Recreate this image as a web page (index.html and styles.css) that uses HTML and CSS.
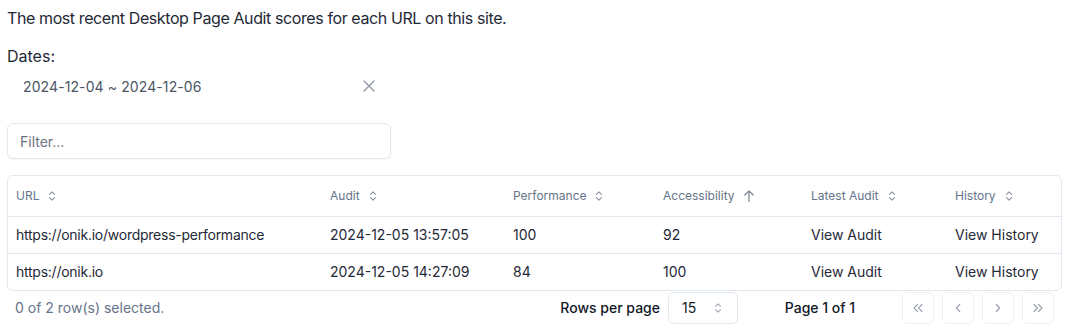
FILE: index.html
```html
<!DOCTYPE html>
<html lang="en">
<head>
<meta charset="utf-8">
<link rel="stylesheet" href="styles.css">
</head>
<body>
<div class="page">
  <p class="intro">The most recent Desktop Page Audit scores for each URL on this site.</p>
  <div class="dates-label">Dates:</div>
  <div class="datepicker">
    <span class="date-range">2024-12-04 ~ 2024-12-06</span>
    <svg class="clear-icon" width="14" height="14" viewBox="0 0 14 14" fill="none" stroke="#8b93a1" stroke-width="1.3" stroke-linecap="round"><path d="M2 2l10 10M12 2L2 12"/></svg>
  </div>
  <div class="filter-wrap"><input class="filter" type="text" placeholder="Filter..."></div>
  <div class="table-box">
    <table class="data-table">
      <colgroup>
        <col class="c-url"><col class="c-audit"><col class="c-perf"><col class="c-acc"><col class="c-latest"><col class="c-hist">
      </colgroup>
      <thead>
        <tr>
          <th><span class="th-in">URL <svg class="sort" width="10" height="12" viewBox="0 0 10 12" fill="none" stroke="#8b93a1" stroke-width="1.1" stroke-linecap="round" stroke-linejoin="round"><path d="M2.5 4.3L5 1.8l2.5 2.5M2.5 7.7L5 10.2l2.5-2.5"/></svg></span></th>
          <th><span class="th-in">Audit <svg class="sort" width="10" height="12" viewBox="0 0 10 12" fill="none" stroke="#8b93a1" stroke-width="1.1" stroke-linecap="round" stroke-linejoin="round"><path d="M2.5 4.3L5 1.8l2.5 2.5M2.5 7.7L5 10.2l2.5-2.5"/></svg></span></th>
          <th><span class="th-in">Performance <svg class="sort" width="10" height="12" viewBox="0 0 10 12" fill="none" stroke="#8b93a1" stroke-width="1.1" stroke-linecap="round" stroke-linejoin="round"><path d="M2.5 4.3L5 1.8l2.5 2.5M2.5 7.7L5 10.2l2.5-2.5"/></svg></span></th>
          <th><span class="th-in">Accessibility <svg class="sort-up" width="12" height="14" viewBox="0 0 12 14" fill="none" stroke="#7b8494" stroke-width="1.2" stroke-linecap="round" stroke-linejoin="round"><path d="M6 12.5V1.8M1.8 6L6 1.8 10.2 6"/></svg></span></th>
          <th><span class="th-in">Latest Audit <svg class="sort" width="10" height="12" viewBox="0 0 10 12" fill="none" stroke="#8b93a1" stroke-width="1.1" stroke-linecap="round" stroke-linejoin="round"><path d="M2.5 4.3L5 1.8l2.5 2.5M2.5 7.7L5 10.2l2.5-2.5"/></svg></span></th>
          <th><span class="th-in">History <svg class="sort" width="10" height="12" viewBox="0 0 10 12" fill="none" stroke="#8b93a1" stroke-width="1.1" stroke-linecap="round" stroke-linejoin="round"><path d="M2.5 4.3L5 1.8l2.5 2.5M2.5 7.7L5 10.2l2.5-2.5"/></svg></span></th>
        </tr>
      </thead>
      <tbody>
        <tr>
          <td class="url">https://onik.io/wordpress-performance</td>
          <td>2024-12-05 13:57:05</td>
          <td>100</td>
          <td>92</td>
          <td>View Audit</td>
          <td>View History</td>
        </tr>
        <tr>
          <td class="url">https://onik.io</td>
          <td>2024-12-05 14:27:09</td>
          <td>84</td>
          <td>100</td>
          <td>View Audit</td>
          <td>View History</td>
        </tr>
      </tbody>
    </table>
  </div>
  <div class="footer">
    <div class="selected">0 of 2 row(s) selected.</div>
    <div class="controls">
      <div class="rows-per-page">
        <span class="rpp-label">Rows per page</span>
        <div class="select">
          <span>15</span>
          <svg width="10" height="12" viewBox="0 0 10 12" fill="none" stroke="#a3aab6" stroke-width="1.1" stroke-linecap="round" stroke-linejoin="round"><path d="M2.5 4.3L5 1.8l2.5 2.5M2.5 7.7L5 10.2l2.5-2.5"/></svg>
        </div>
      </div>
      <div class="page-info">Page 1 of 1</div>
      <div class="pager">
        <button class="pbtn"><svg width="16" height="16" viewBox="0 0 16 16" fill="none" stroke="#9aa1ad" stroke-width="1.1" stroke-linecap="round" stroke-linejoin="round"><path d="M7.5 4.5L4 8l3.5 3.5M12 4.5L8.5 8l3.5 3.5"/></svg></button>
        <button class="pbtn"><svg width="16" height="16" viewBox="0 0 16 16" fill="none" stroke="#9aa1ad" stroke-width="1.1" stroke-linecap="round" stroke-linejoin="round"><path d="M9.7 4.5L6.3 8l3.4 3.5"/></svg></button>
        <button class="pbtn"><svg width="16" height="16" viewBox="0 0 16 16" fill="none" stroke="#9aa1ad" stroke-width="1.1" stroke-linecap="round" stroke-linejoin="round"><path d="M6.3 4.5L9.7 8l-3.4 3.5"/></svg></button>
        <button class="pbtn"><svg width="16" height="16" viewBox="0 0 16 16" fill="none" stroke="#9aa1ad" stroke-width="1.1" stroke-linecap="round" stroke-linejoin="round"><path d="M4 4.5L7.5 8 4 11.5M8.5 4.5L12 8l-3.5 3.5"/></svg></button>
      </div>
    </div>
  </div>
</div>
</body>
</html>
```

FILE: styles.css
```css
* { box-sizing: border-box; }
html, body { margin: 0; padding: 0; background: #ffffff; }
body {
  font-family: Inter, "Noto Sans", "Liberation Sans", sans-serif;
  color: #1f2937;
}
.page {
  width: 1062px;
  padding: 6px 0 0 7px;
}
.intro {
  margin: 0;
  font-size: 16px;
  line-height: 24px;
  letter-spacing: -0.4px;
  color: #1f2937;
}
.dates-label {
  margin-top: 14px;
  font-size: 16px;
  line-height: 24px;
  color: #1f2937;
}
.datepicker {
  display: flex;
  align-items: center;
  justify-content: space-between;
  width: 379px;
  height: 36px;
  padding: 0 10px 0 16px;
}
.date-range {
  font-size: 14px;
  color: #4b5563;
  letter-spacing: 0.1px;
}
.filter-wrap { margin-top: 19px; }
.filter {
  display: block;
  width: 384px;
  height: 36px;
  border: 1px solid #e2e8f0;
  border-radius: 6px;
  padding: 0 12px;
  font-family: inherit;
  font-size: 14px;
  color: #1f2937;
  box-shadow: 0 1px 2px rgba(0,0,0,0.04);
  outline: none;
}
.filter::placeholder { color: #6b7280; }
.table-box {
  margin-top: 16px;
  border: 1px solid #e2e8f0;
  border-radius: 6px;
  overflow: hidden;
}
.data-table {
  width: 100%;
  border-collapse: collapse;
  table-layout: fixed;
}
.c-url { width: 314px; }
.c-audit { width: 183px; }
.c-perf { width: 150px; }
.c-acc { width: 148px; }
.c-latest { width: 144px; }
.c-hist { width: auto; }
.data-table th {
  height: 40px;
  padding: 0 8px;
  text-align: left;
  font-weight: 400;
  font-size: 12px;
  color: #64748b;
  border-bottom: 1px solid #e2e8f0;
}
.th-in {
  display: inline-flex;
  align-items: center;
  gap: 8px;
}
.data-table td {
  padding: 8px;
  height: 36px;
  font-size: 14px;
  line-height: 20px;
  color: #1f2937;
  white-space: nowrap;
}
.data-table td.url { letter-spacing: -0.25px; }
.data-table tbody tr + tr td { border-top: 1px solid #e2e8f0; }
.footer {
  display: flex;
  align-items: center;
  justify-content: space-between;
  padding: 1px 8px 0 8px;
  height: 33px;
}
.selected {
  font-size: 14px;
  color: #64748b;
}
.controls {
  display: flex;
  align-items: center;
  gap: 32px;
}
.rows-per-page {
  display: flex;
  align-items: center;
  gap: 8px;
}
.rpp-label {
  font-size: 14px;
  font-weight: 500;
  color: #111827;
}
.select {
  width: 70px;
  height: 32px;
  border: 1px solid #e2e8f0;
  border-radius: 6px;
  display: flex;
  align-items: center;
  justify-content: space-between;
  padding: 0 14px 0 13px;
  font-size: 14px;
  color: #111827;
  box-shadow: 0 1px 2px rgba(0,0,0,0.04);
}
.page-info {
  width: 100px;
  text-align: center;
  font-size: 14px;
  font-weight: 500;
  color: #111827;
}
.pager {
  display: flex;
  gap: 8px;
}
.pbtn {
  width: 32px;
  height: 32px;
  border: 1px solid #eef0f4;
  border-radius: 6px;
  background: #ffffff;
  display: flex;
  align-items: center;
  justify-content: center;
  padding: 0;
}
```
